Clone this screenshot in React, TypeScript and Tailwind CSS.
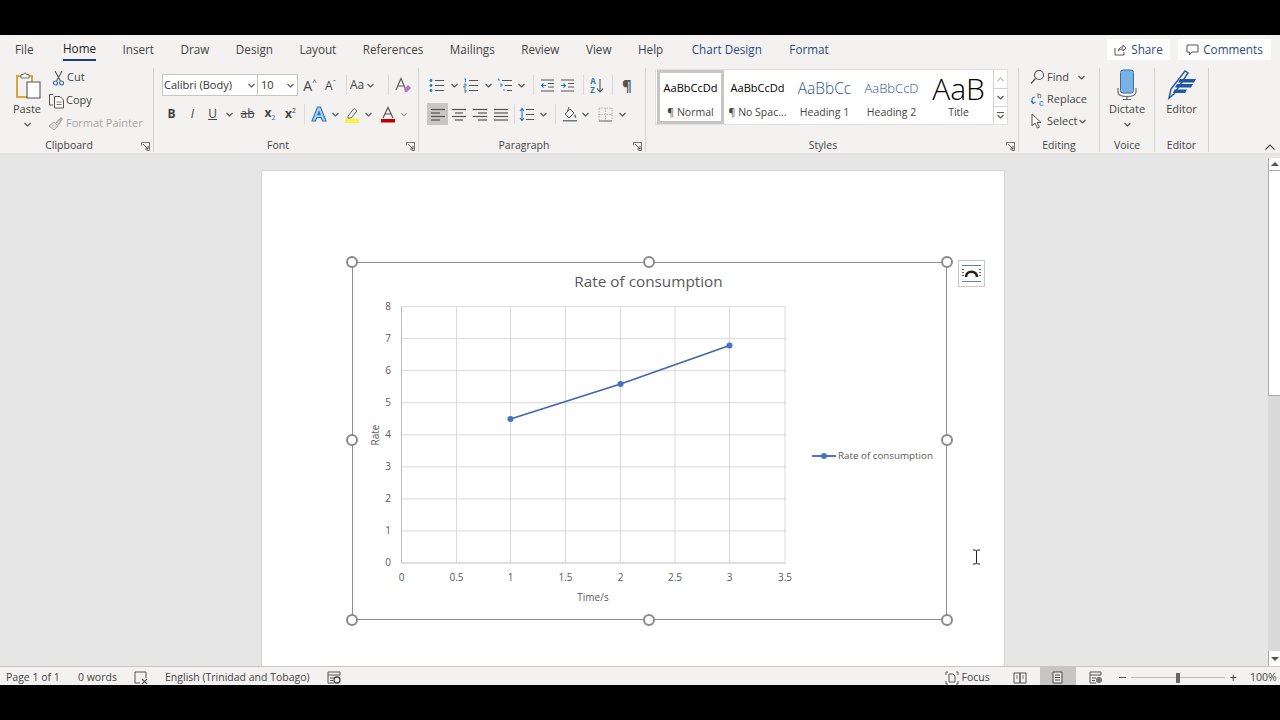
import React from "react";

const Chev = ({ className = "" }: { className?: string }) => (
  <svg width="7" height="5" viewBox="0 0 7 5" className={className}>
    <path d="M0.5 1 L3.5 4 L6.5 1" fill="none" stroke="#555" strokeWidth="1.1" />
  </svg>
);

const Sep = () => <div className="w-px h-[84px] mt-[2px] bg-[#d4d3d2] shrink-0" />;
const MiniSep = ({ className = "" }: { className?: string }) => (
  <div className={"w-px h-[20px] bg-[#dcdbda] shrink-0 " + className} />
);

const Launcher = () => (
  <svg width="9" height="9" viewBox="0 0 9 9" className="absolute right-[3px] bottom-[2px]">
    <path d="M0.5 3.5 V0.5 H8.5 V8.5 H5.5" fill="none" stroke="#777" strokeWidth="1" />
    <path d="M2 2 L7 7 M4 7 H7 V4" fill="none" stroke="#555" strokeWidth="1" />
  </svg>
);

const Lines = ({ kind }: { kind: "left" | "center" | "right" | "full" }) => {
  const rows = {
    left: ["M1 2.5H15", "M1 6H10", "M1 9.5H15", "M1 13H10"],
    center: ["M1 2.5H15", "M4 6H12", "M1 9.5H15", "M4 13H12"],
    right: ["M1 2.5H15", "M6 6H15", "M1 9.5H15", "M6 13H15"],
    full: ["M1 2.5H15", "M1 6H15", "M1 9.5H15", "M1 13H15"],
  }[kind];
  return (
    <svg width="16" height="15" viewBox="0 0 16 15">
      {rows.map((d) => (
        <path key={d} d={d} stroke="#555" strokeWidth="1.2" />
      ))}
    </svg>
  );
};

const GroupLabel = ({ children, className = "" }: { children: React.ReactNode; className?: string }) => (
  <div className={"h-[17px] pt-[2px] flex items-center justify-center text-[10.5px] text-[#444] " + className}>{children}</div>
);

const StyleItem = ({ sample, name, className, selected }: { sample: string; name: string; className: string; selected?: boolean }) => (
  <div className={"w-[67px] flex flex-col items-center overflow-hidden shrink-0 h-[54px] border-[3px] " + (selected ? "border-[#c8c6c4]" : "border-transparent")}>
    <div className={"h-[29px] mt-[1px] w-full flex items-center justify-center overflow-hidden whitespace-nowrap " + className}>{sample}</div>
    <div className="text-[10.5px] text-[#444] leading-[14px] mt-[2px] whitespace-nowrap">{name}</div>
  </div>
);

function Clipboard() {
  return (
    <div className="w-[153px] shrink-0 flex flex-col">
      <div className="h-[71px] flex">
        <div className="w-[48px] pl-[6px] flex flex-col items-center pt-[6px]">
          <svg width="27" height="28" viewBox="0 0 27 28">
            <path d="M3 4H18V25H3Z" fill="#f3f2f1" stroke="#d9a441" strokeWidth="2" />
            <path d="M7 4V2.5H9.5L10.5 1H11.5L12.5 2.5H15V6H7Z" fill="#f3f2f1" stroke="#777" strokeWidth="1" />
            <path d="M13 10H26V26H13Z" fill="#fff" stroke="#555" strokeWidth="1.1" />
          </svg>
          <div className="text-[11px] text-[#444] leading-[14px] mt-[2px]">Paste</div>
          <Chev className="mt-[6px]" />
        </div>
        <div className="flex flex-col text-[11px] text-[#444]">
          <div className="h-[23px] flex items-center gap-[2px] pl-[4px]">
            <svg width="13" height="16" viewBox="0 0 13 16">
              <path d="M3 1 L8.5 11 M10 1 L4.5 11" stroke="#555" strokeWidth="1.1" />
              <circle cx="3.5" cy="13" r="2" fill="none" stroke="#3f6ea5" strokeWidth="1.2" />
              <circle cx="9.5" cy="13" r="2" fill="none" stroke="#3f6ea5" strokeWidth="1.2" />
            </svg>
            Cut
          </div>
          <div className="h-[23px] flex items-center gap-[1px]">
            <svg width="17" height="16" viewBox="0 0 17 16">
              <path d="M5 1.5H1.5V12H5" fill="none" stroke="#555" strokeWidth="1" />
              <path d="M6.5 3.5H12L15.5 7V15H6.5Z" fill="#fff" stroke="#555" strokeWidth="1" />
              <path d="M8.5 9H13.5M8.5 11.5H13.5" stroke="#777" strokeWidth="1" />
            </svg>
            Copy
          </div>
          <div className="h-[23px] flex items-center gap-[3px] text-[#a5a4a3]">
            <svg width="15" height="14" viewBox="0 0 15 14">
              <path d="M1 9 L6 5 L10 9 L6 13 Z" fill="#dddcdb" stroke="#a9a8a7" strokeWidth="1" />
              <path d="M8 6 L13 1 L14 2 L10 8" fill="none" stroke="#a9a8a7" strokeWidth="1.4" />
            </svg>
            Format Painter
          </div>
        </div>
      </div>
      <div className="relative pl-[14px] pr-[29px]">
        <GroupLabel>Clipboard</GroupLabel>
        <Launcher />
      </div>
    </div>
  );
}

function Font() {
  return (
    <div className="w-[264px] shrink-0 flex flex-col">
      <div className="h-[71px] pl-[8px] pt-[8px] flex flex-col gap-[7px]">
        <div className="flex items-center h-[22px]">
          <div className="w-[96px] h-[22px] bg-white border border-[#c8c6c4] flex items-center justify-between pl-[1px] pr-[2px] text-[11px] text-[#333]">
            Calibri (Body) <Chev />
          </div>
          <div className="w-[40px] h-[22px] bg-white border-y border-r border-[#c8c6c4] flex items-center justify-between pl-[3px] pr-[3px] text-[11px] text-[#333]">
            10 <Chev />
          </div>
          <div className="w-[22px] ml-[1px] text-[14px] text-[#444] text-center whitespace-nowrap">
            A<span className="text-[8px] align-super">^</span>
          </div>
          <div className="w-[19px] text-[12px] text-[#444] text-center whitespace-nowrap">
            A<span className="text-[8px] align-super">ˇ</span>
          </div>
          <MiniSep className="ml-[6px]" />
          <div className="w-[33px] ml-[3px] flex items-center gap-[3px] text-[12px] text-[#444]">
            Aa <Chev />
          </div>
          <MiniSep className="ml-[5px]" />
          <div className="w-[24px] ml-[2px] flex justify-center">
            <svg width="17" height="17" viewBox="0 0 17 17">
              <path d="M1 13 L6 1.5 L10 11 M2.8 9H8.5" fill="none" stroke="#555" strokeWidth="1.1" />
              <path d="M9 12 L13 8 L16 11 L12 15 H10 Z" fill="#b675c8" />
            </svg>
          </div>
        </div>
        <div className="flex items-center h-[22px] text-[#444] -ml-[1px]">
          <div className="w-[21px] text-center text-[12px] font-bold">B</div>
          <div className="w-[21px] text-center text-[12px] italic">I</div>
          <div className="w-[19px] text-center text-[12px] underline">U</div>
          <div className="w-[14px] flex justify-center"><Chev /></div>
          <div className="w-[23px] text-center text-[12px] line-through">ab</div>
          <div className="w-[22px] text-center text-[12px] font-bold whitespace-nowrap">
            x<span className="text-[7px] font-normal text-[#3f6ea5] align-sub">2</span>
          </div>
          <div className="w-[19px] text-center text-[12px] font-bold whitespace-nowrap">
            x<span className="text-[7px] font-normal align-super">2</span>
          </div>
          <MiniSep className="ml-[4px]" />
          <div className="w-[26px] ml-[1px] flex justify-center">
            <svg width="16" height="16" viewBox="0 0 16 16">
              <path d="M1 15 L6.5 1 H9.5 L15 15 H11.5 L10.2 11.5 H5.8 L4.5 15 Z M6.8 8.8 H9.2 L8 5.5 Z" fill="#a9d0f0" stroke="#2e75b6" strokeWidth="1.1" />
            </svg>
          </div>
          <div className="w-[7px] flex justify-center"><Chev /></div>
          <div className="w-[26px] flex justify-center">
            <svg width="16" height="17" viewBox="0 0 16 17">
              <path d="M4 10 L10 2.5 L13 5 L7 12 H4 Z" fill="none" stroke="#666" strokeWidth="1" />
              <rect x="1" y="13" width="14" height="4" fill="#ffef3a" />
            </svg>
          </div>
          <div className="w-[7px] flex justify-center"><Chev /></div>
          <div className="w-[27px] ml-[2px] flex justify-center">
            <svg width="16" height="17" viewBox="0 0 16 17">
              <path d="M3 12 L8 1.5 L13 12 M5 8H11" fill="none" stroke="#555" strokeWidth="1.2" />
              <rect x="1" y="13" width="14" height="3.5" fill="#c00000" />
            </svg>
          </div>
          <div className="w-[6px] flex justify-center"><Chev /></div>
        </div>
      </div>
      <div className="relative">
        <GroupLabel className="pr-[16px]">Font</GroupLabel>
        <Launcher />
      </div>
    </div>
  );
}

function Paragraph() {
  return (
    <div className="w-[226px] shrink-0 flex flex-col">
      <div className="h-[71px] pl-[9px] pt-[8px] flex flex-col gap-[7px]">
        <div className="flex items-center h-[22px]">
          <div className="w-[18px] flex justify-center">
            <svg width="16" height="15" viewBox="0 0 16 15">
              <circle cx="2" cy="2.5" r="1.4" fill="#2e75b6" />
              <circle cx="2" cy="7.5" r="1.4" fill="#2e75b6" />
              <circle cx="2" cy="12.5" r="1.4" fill="#2e75b6" />
              <path d="M6 2.5H15M6 7.5H15M6 12.5H15" stroke="#555" strokeWidth="1.1" />
            </svg>
          </div>
          <div className="w-[16px] flex justify-center"><Chev /></div>
          <div className="w-[18px] flex justify-center">
            <svg width="16" height="15" viewBox="0 0 16 15">
              <path d="M1 1H2.5V4M1 6H3V8H1V10H3M1 12H3V14H1" fill="none" stroke="#2e75b6" strokeWidth="0.9" />
              <path d="M6 2.5H15M6 7.5H15M6 12.5H15" stroke="#555" strokeWidth="1.1" />
            </svg>
          </div>
          <div className="w-[16px] flex justify-center"><Chev /></div>
          <div className="w-[18px] flex justify-center">
            <svg width="16" height="15" viewBox="0 0 16 15">
              <path d="M1 1H2V3M3 6H5V8H3M6 12H8" fill="none" stroke="#2e75b6" strokeWidth="0.9" />
              <path d="M5 2.5H15M8 7.5H15M10 12.5H15" stroke="#555" strokeWidth="1.1" />
            </svg>
          </div>
          <div className="w-[14px] flex justify-center"><Chev /></div>
          <MiniSep className="ml-[5px]" />
          <div className="w-[20px] ml-[3px] flex justify-center">
            <svg width="15" height="13" viewBox="0 0 15 13">
              <path d="M1 1H14M8 4.5H14M8 8H14M1 12H14" stroke="#555" strokeWidth="1.1" />
              <path d="M6 6.5H1.5M3.5 4.5L1.5 6.5L3.5 8.5" fill="none" stroke="#2e75b6" strokeWidth="1.1" />
            </svg>
          </div>
          <div className="w-[21px] flex justify-center">
            <svg width="15" height="13" viewBox="0 0 15 13">
              <path d="M1 1H14M8 4.5H14M8 8H14M1 12H14" stroke="#555" strokeWidth="1.1" />
              <path d="M1 6.5H5.5M3.5 4.5L5.5 6.5L3.5 8.5" fill="none" stroke="#2e75b6" strokeWidth="1.1" />
            </svg>
          </div>
          <MiniSep className="ml-[5px]" />
          <div className="w-[20px] ml-[3px] flex justify-center items-center">
            <div className="flex flex-col text-[8px] text-[#2e75b6] leading-[9px] font-bold">
              <span>A</span>
              <span>Z</span>
            </div>
            <svg width="8" height="15" viewBox="0 0 8 15">
              <path d="M4 1V14M1 10.5L4 14L7 10.5" fill="none" stroke="#555" strokeWidth="1.1" />
            </svg>
          </div>
          <MiniSep className="ml-[5px]" />
          <div className="w-[22px] ml-[3px] text-center text-[15px] font-bold text-[#555] leading-none">¶</div>
        </div>
        <div className="flex items-center h-[22px] -ml-[1px]">
          <div className="w-[21px] h-[22px] bg-[#c8c6c4] flex items-center justify-center"><Lines kind="left" /></div>
          <div className="w-[21px] flex justify-center"><Lines kind="center" /></div>
          <div className="w-[21px] flex justify-center"><Lines kind="right" /></div>
          <div className="w-[21px] flex justify-center"><Lines kind="full" /></div>
          <MiniSep className="ml-[3px]" />
          <div className="w-[22px] ml-[1px] flex justify-center">
            <svg width="16" height="15" viewBox="0 0 16 15">
              <path d="M3 2V13M1 4L3 1.5L5 4M1 11L3 13.5L5 11" fill="none" stroke="#2e75b6" strokeWidth="1.1" />
              <path d="M7 2.5H15M7 7.5H15M7 12.5H15" stroke="#555" strokeWidth="1.1" />
            </svg>
          </div>
          <div className="w-[10px] flex justify-center"><Chev /></div>
          <MiniSep className="ml-[7px]" />
          <div className="w-[24px] ml-[2px] flex justify-center">
            <svg width="16" height="16" viewBox="0 0 16 16">
              <path d="M3 8 L8 3 L12 7 L7 12 Z M5.5 5 L7 1" fill="none" stroke="#555" strokeWidth="1" />
              <path d="M13 8 C14 10 15 11 13.5 12 C12 11 12 10 13 8Z" fill="#2e75b6" />
              <rect x="1" y="14" width="14" height="1.5" fill="#777" />
            </svg>
          </div>
          <div className="w-[7px] flex justify-center"><Chev /></div>
          <div className="w-[26px] ml-[3px] flex justify-center">
            <svg width="15" height="15" viewBox="0 0 15 15">
              <path d="M1 1H14V14H1ZM7.5 1V14M1 7.5H14" fill="none" stroke="#b5b4b3" strokeWidth="1" strokeDasharray="1.5 1" />
              <path d="M1 14H14" stroke="#777" strokeWidth="1" />
            </svg>
          </div>
          <div className="w-[8px] flex justify-center"><Chev /></div>
        </div>
      </div>
      <div className="relative">
        <GroupLabel className="pr-[16px]">Paragraph</GroupLabel>
        <Launcher />
      </div>
    </div>
  );
}

function Styles() {
  return (
    <div className="w-[372px] shrink-0 flex flex-col">
      <div className="h-[71px] pl-[9px] pt-[3px]">
        <div className="w-[353px] h-[56px] bg-white border border-[#e1dfdd] flex pl-[1px]">
          <div className="flex w-[336px] overflow-hidden">
            <StyleItem selected sample="AaBbCcDd" name="¶ Normal" className="text-[11px] text-black" />
            <StyleItem sample="AaBbCcDd" name="¶ No Spac..." className="text-[11px] text-black" />
            <StyleItem sample="AaBbCc" name="Heading 1" className="text-[15.5px] text-[#2f5496] font-light" />
            <StyleItem sample="AaBbCcD" name="Heading 2" className="text-[13px] text-[#2f5496] font-light" />
            <StyleItem sample="AaB" name="Title" className="text-[30px] leading-[29px] text-black font-light" />
          </div>
          <div className="flex flex-col w-[14px] ml-auto border-l border-[#d4d3d2] h-[54px]">
            <div className="h-[19px] flex items-center justify-center border-b border-[#d4d3d2]">
              <svg width="7" height="5" viewBox="0 0 7 5"><path d="M0.5 4 L3.5 1 L6.5 4" fill="none" stroke="#bbb" strokeWidth="1.1" /></svg>
            </div>
            <div className="h-[18px] flex items-center justify-center border-b border-[#d4d3d2]"><Chev /></div>
            <div className="h-[17px] flex flex-col items-center justify-center gap-[1px]">
              <div className="w-[7px] h-px bg-[#555]" />
              <Chev />
            </div>
          </div>
        </div>
      </div>
      <div className="relative">
        <GroupLabel className="pr-[18px]">Styles</GroupLabel>
        <Launcher />
      </div>
    </div>
  );
}

function Editing() {
  return (
    <div className="w-[80px] shrink-0 flex flex-col">
      <div className="h-[71px] pl-[11px] flex flex-col text-[11px] text-[#444]">
        <div className="h-[22px] flex items-center gap-[2px]">
          <svg width="15" height="16" viewBox="0 0 15 16">
            <circle cx="9" cy="6" r="4.5" fill="none" stroke="#555" strokeWidth="1.1" />
            <path d="M5.5 9.5 L1 14.5" stroke="#555" strokeWidth="1.3" />
          </svg>
          Find
          <Chev className="ml-[7px]" />
        </div>
        <div className="h-[22px] flex items-center gap-[1px]">
          <svg width="16" height="16" viewBox="0 0 16 16">
            <path d="M5 6 C2 6 1 9 3 12 M1 10 L3 12.5 L5.5 11" fill="none" stroke="#2e75b6" strokeWidth="1.1" />
            <text x="7" y="7" fontSize="8" fill="#555" fontFamily="Liberation Sans, sans-serif">b</text>
            <text x="9" y="15" fontSize="9" fill="#2e75b6" fontFamily="Liberation Sans, sans-serif">c</text>
          </svg>
          Replace
        </div>
        <div className="h-[22px] flex items-center gap-[3px]">
          <svg width="14" height="16" viewBox="0 0 14 16">
            <path d="M2 1 V13 L5 10 L7.5 15 L9.5 14 L7 9.5 H11 Z" fill="#fff" stroke="#555" strokeWidth="1" />
          </svg>
          Select
          <Chev className="-ml-[1px]" />
        </div>
      </div>
      <GroupLabel>Editing</GroupLabel>
    </div>
  );
}

function Voice() {
  return (
    <div className="w-[54px] shrink-0 flex flex-col">
      <div className="h-[71px] flex flex-col items-center pt-[3px]">
        <svg width="20" height="31" viewBox="0 0 20 31">
          <rect x="3.5" y="1" width="13" height="23" rx="2.5" fill="#7ab2e6" stroke="#3a6ea8" strokeWidth="1" />
          <path d="M1 19 V23 C1 26 4 27.5 10 27.5 C16 27.5 19 26 19 23 V19" fill="none" stroke="#666" strokeWidth="1.1" />
          <path d="M10 27.5 V30 M6 30.5 H14" stroke="#666" strokeWidth="1.1" />
        </svg>
        <div className="text-[11px] text-[#444] leading-[14px] mt-[2px]">Dictate</div>
        <Chev className="mt-[6px]" />
      </div>
      <GroupLabel>Voice</GroupLabel>
    </div>
  );
}

function EditorGroup() {
  return (
    <div className="w-[53px] shrink-0 flex flex-col">
      <div className="h-[71px] flex flex-col items-center pt-[3px]">
        <svg width="30" height="31" viewBox="0 0 30 31">
          <path d="M2 29 L4 20 L18 2 L21 4 L7 25 Z" fill="none" stroke="#2b5ca8" strokeWidth="1.5" />
          <path d="M13 10 H29 L27 13.5 H11 Z M10 15 H26 L24 18.5 H8 Z M7.5 20.5 H20 L18 24 H6 Z" fill="#1f56a5" />
        </svg>
        <div className="text-[11px] text-[#444] leading-[14px] mt-[2px]">Editor</div>
      </div>
      <GroupLabel>Editor</GroupLabel>
    </div>
  );
}

const yTicks = [8, 7, 6, 5, 4, 3, 2, 1, 0];
const xTicks = ["0", "0.5", "1", "1.5", "2", "2.5", "3", "3.5"];
const xPos = [401.5, 456.5, 510.5, 565.5, 620.5, 675, 729.5, 785];
const points = [
  [510.5, 419],
  [620.5, 384],
  [729.5, 345.5],
];

function Chart() {
  return (
    <svg viewBox="352 262 595 358" className="w-full h-full block" fontFamily="'Open Sans', sans-serif">
      <text x="648.5" y="286.5" textAnchor="middle" fontSize="15.3" fill="#595959">Rate of consumption</text>
      {yTicks.map((t) => {
        const y = 563 - t * 32.05;
        return (
          <g key={t}>
            <path d={`M401.5 ${y} H785.5`} stroke={t === 0 ? "#bdbdbd" : "#d9d9d9"} strokeWidth="1" />
            <text x="388" y={y + 3} textAnchor="middle" fontSize="10" fill="#595959">{t}</text>
          </g>
        );
      })}
      {xTicks.map((t, i) => (
        <g key={t}>
          <path d={`M${xPos[i]} 306.5 V563`} stroke={i === 0 ? "#bdbdbd" : "#d9d9d9"} strokeWidth="1" />
          <text x={xPos[i]} y="581" textAnchor="middle" fontSize="10" fill="#595959">{t}</text>
        </g>
      ))}
      <text x="593" y="600.5" textAnchor="middle" fontSize="10" fill="#595959">Time/s</text>
      <text transform="translate(379 435) rotate(-90)" textAnchor="middle" fontSize="10" fill="#595959">Rate</text>
      <polyline points={points.map((p) => p.join(",")).join(" ")} fill="none" stroke="#4068ac" strokeWidth="1.8" />
      {points.map((p) => (
        <circle key={p[0]} cx={p[0]} cy={p[1]} r="3" fill="#4472c4" />
      ))}
      <path d="M812 456 H836" stroke="#4068ac" strokeWidth="1.8" />
      <circle cx="824" cy="456" r="3" fill="#4472c4" />
      <text x="838" y="458.5" fontSize="9.8" fill="#595959">Rate of consumption</text>
    </svg>
  );
}

const Handle = ({ className }: { className: string }) => (
  <div className={"absolute w-[12px] h-[12px] rounded-full bg-white border-2 border-[#8a8a8a] " + className} />
);

export default function App() {
  const tabs = ["File", "Home", "Insert", "Draw", "Design", "Layout", "References", "Mailings", "Review", "View", "Help"];
  return (
    <div className="w-[1280px] h-[720px] bg-black flex flex-col overflow-hidden font-['Open_Sans',sans-serif]">
      <div className="h-[35px] shrink-0" />

      <div className="h-[120px] shrink-0 bg-[#f3f2f1] flex flex-col border-b-2 border-[#e4e3e2]">
        <div className="h-[31px] flex items-start pt-[4px] pl-[15px] text-[11.7px] text-[#444] shrink-0">
          <div className="flex gap-[26.5px]">
            {tabs.map((t) => (
              <div key={t} className={"h-[22px] flex items-center " + (t === "Home" ? "ml-[3px] text-[#222] border-b-[2px] border-[#1f3f77] font-medium" : "")}>
                {t}
              </div>
            ))}
            <div className="h-[22px] flex items-center text-[#2b4c7e] ml-[2px]">Chart Design</div>
            <div className="h-[22px] flex items-center text-[#2b4c7e] ml-[1px]">Format</div>
          </div>
          <div className="ml-auto flex gap-[8px] pr-[9px]">
            <div className="w-[63px] h-[21px] bg-white flex items-center justify-center gap-[4px] text-[#2b4c7e] font-medium">
              <svg width="13" height="13" viewBox="0 0 13 13">
                <path d="M1 5V12H10V9M4 8C5 5 7 4 9 4V2L12 5L9 8V6C7 6 5.5 6.5 4 8Z" fill="none" stroke="#555" strokeWidth="1" />
              </svg>
              Share
            </div>
            <div className="w-[93px] h-[21px] bg-white flex items-center justify-center gap-[4px] text-[#2b4c7e] font-medium">
              <svg width="13" height="12" viewBox="0 0 13 12">
                <path d="M1 1H12V8H6L3.5 11V8H1Z" fill="none" stroke="#555" strokeWidth="1" />
              </svg>
              Comments
            </div>
          </div>
        </div>
        <div className="flex h-[87px]">
          <Clipboard />
          <Sep />
          <Font />
          <Sep />
          <Paragraph />
          <Sep />
          <Styles />
          <Sep />
          <Editing />
          <Sep />
          <Voice />
          <Sep />
          <EditorGroup />
          <Sep />
          <svg width="10" height="6" viewBox="0 0 10 6" className="ml-auto mr-[5px] mt-[78px]">
            <path d="M0.5 5.5 L5 1 L9.5 5.5" fill="none" stroke="#444" strokeWidth="1.1" />
          </svg>
        </div>
      </div>

      <div className="h-[511px] shrink-0 bg-[#e6e6e6] flex relative overflow-hidden">
        <div className="ml-[261px] mt-[15px] w-[744px] bg-white border-x border-t border-[#d4d4d4] relative pl-[90px] pt-[91px]">
          <div className="relative w-[595px] h-[358px] outline-[1.5px] -outline-offset-1 outline-[#8f8f8f]">
            <Chart />
            <Handle className="-left-[6px] -top-[6px]" />
            <Handle className="left-[291px] -top-[6px]" />
            <Handle className="-right-[6px] -top-[6px]" />
            <Handle className="-left-[6px] top-[172px]" />
            <Handle className="-right-[6px] top-[172px]" />
            <Handle className="-left-[6px] -bottom-[6px]" />
            <Handle className="left-[291px] -bottom-[6px]" />
            <Handle className="-right-[6px] -bottom-[6px]" />
          </div>
          <div className="absolute left-[696px] top-[89px] w-[27px] h-[27px] bg-white border border-[#c8c6c4] flex items-center justify-center">
            <svg width="21" height="19" viewBox="0 0 21 19">
              <path d="M1 1.5H20M1 17.5H20" stroke="#5b8a94" strokeWidth="1" />
              <path d="M1 5.5H3M1 8.5H3M1 11.5H3M18 5.5H20M18 8.5H20M18 11.5H20" stroke="#666" strokeWidth="1" />
              <path d="M5 13 C5 6 16 6 16 13" fill="none" stroke="#222" strokeWidth="2.6" />
            </svg>
          </div>
          <svg width="9" height="16" viewBox="0 0 9 16" className="absolute left-[710px] top-[378px]">
            <path d="M1 1H3.5L4.5 2L5.5 1H8M4.5 2V14M1 15H3.5L4.5 14L5.5 15H8" fill="none" stroke="#222" strokeWidth="1" />
          </svg>
        </div>

        <div className="absolute right-0 top-[3px] bottom-0 w-[12px] flex flex-col">
          <div className="h-[13px] bg-white border-l border-b border-[#ababab] flex items-center justify-center">
            <div className="w-0 h-0 border-x-[4px] border-x-transparent border-b-[4px] border-b-[#555]" />
          </div>
          <div className="h-[225px] bg-white border-l border-b border-[#ababab]" />
          <div className="flex-1 bg-[#dadada]" />
          <div className="h-[15px] bg-white border-l border-[#ababab] flex items-center justify-center">
            <div className="w-0 h-0 border-x-[4px] border-x-transparent border-t-[4px] border-t-[#555]" />
          </div>
        </div>
      </div>

      <div className="h-[19px] shrink-0 bg-[#f3f2f1] border-t border-[#c8c6c4] flex items-center text-[10.5px] text-[#444] pl-[6px]">
        <div className="flex items-center h-full pt-[3px]">
          <span className="w-[72px] whitespace-nowrap">Page 1 of 1</span>
          <span className="w-[56px] whitespace-nowrap">0 words</span>
          <svg width="14" height="14" viewBox="0 0 14 14">
            <path d="M8 1H1V12H6M8 1H12V7" fill="none" stroke="#555" strokeWidth="1" />
            <path d="M8 8L13 13M13 8L8 13" stroke="#555" strokeWidth="1.1" />
          </svg>
          <span className="ml-[17px] w-[162px] whitespace-nowrap">English (Trinidad and Tobago)</span>
          <svg width="14" height="13" viewBox="0 0 14 13">
            <path d="M1 1H13V4H1ZM1 4V12H7M3 7H7M3 9.5H6" fill="none" stroke="#555" strokeWidth="1" />
            <circle cx="10" cy="9" r="3" fill="none" stroke="#444" strokeWidth="1.3" />
          </svg>
        </div>

        <div className="ml-auto flex items-center h-full pt-[3px]">
          <svg width="14" height="14" viewBox="0 0 14 14">
            <path d="M1 4V1H3M11 1H13V4M1 10V13H3M11 13H13V10" fill="none" stroke="#555" strokeWidth="1" />
            <path d="M4 3H8L10 5V11H4Z" fill="none" stroke="#555" strokeWidth="1" />
          </svg>
          <span className="ml-[3px] w-[51px]">Focus</span>
          <svg width="14" height="12" viewBox="0 0 14 12">
            <path d="M1 1H7V11H1ZM7 1H13V11H7Z" fill="none" stroke="#555" strokeWidth="1" />
            <path d="M3 4H5M3 6H5M9 4H11M9 6H11" stroke="#777" strokeWidth="1" />
          </svg>
          <div className="w-[36px] h-[18px] -mt-[3px] pt-[3px] ml-[13px] bg-[#c8c6c4] flex items-center justify-center">
            <svg width="11" height="13" viewBox="0 0 11 13">
              <path d="M1 1H10V12H1Z" fill="#eee" stroke="#444" strokeWidth="1" />
              <path d="M3 4H8M3 6.5H8M3 9H8" stroke="#444" strokeWidth="1" />
            </svg>
          </div>
          <svg width="14" height="13" viewBox="0 0 14 13" className="ml-[13px]">
            <path d="M1 1H12V4H1ZM1 4V12H7M3 7H7M3 9.5H6" fill="none" stroke="#555" strokeWidth="1" />
            <circle cx="10" cy="9" r="3" fill="#777" />
          </svg>
          <div className="ml-[16px] w-[7px] h-px bg-[#555]" />
          <div className="ml-[5px] w-[94px] h-px bg-[#bdbcbb] flex items-center justify-center">
            <div className="w-[4px] h-[10px] bg-[#666] shrink-0" />
          </div>
          <div className="ml-[5px] text-[13px] leading-none">+</div>
          <span className="ml-[13px] w-[30px]">100%</span>
        </div>
      </div>

      <div className="h-[35px] shrink-0" />
    </div>
  );
}
